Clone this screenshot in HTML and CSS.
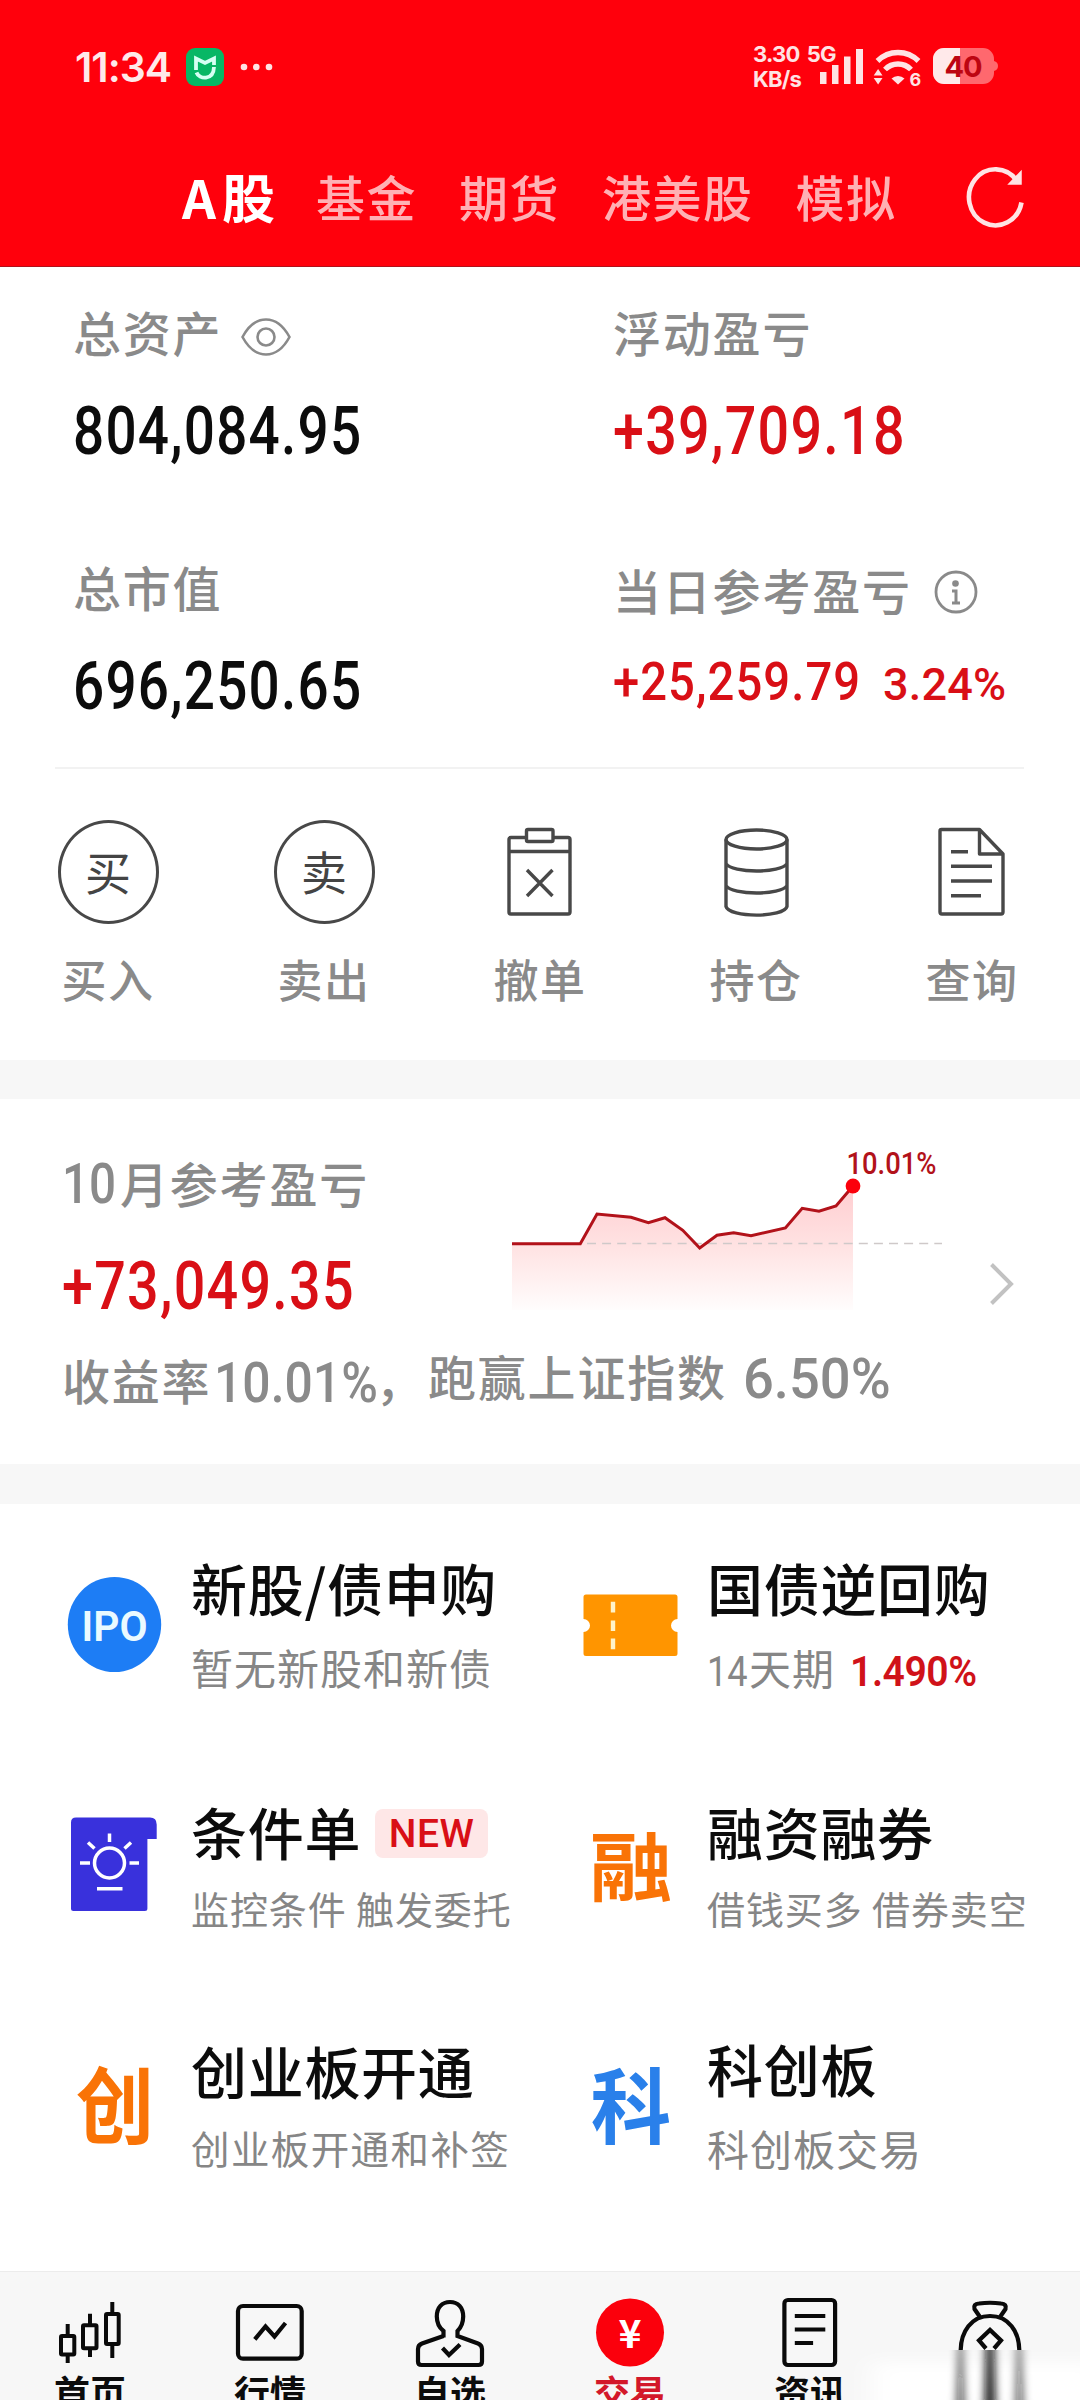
FILE: index.html
```html
<!DOCTYPE html>
<html lang="zh-CN">
<head>
<meta charset="utf-8">
<title>交易</title>
<link rel="stylesheet" href="styles.css">
</head>
<body>
<div class="screen">
  <header class="header">
    <div class="status">
      <span class="clock">11:34</span>
      <svg class="app-badge" width="38" height="38" viewBox="0 0 38 38"><rect width="38" height="38" rx="9" fill="#07b765"/><path d="M10 22V10.500L19 15L28 10.500V17" fill="none" stroke="#d5fff3" stroke-width="3.800"/><path d="M10.500 24.500C13 31.500 27.500 33 28 19" fill="none" stroke="#d5fff3" stroke-width="3.800"/></svg>
      <svg class="dots" width="32" height="8" viewBox="0 0 32 8"><g fill="#ffe3e4"><circle cx="4" cy="4" r="3.300"/><circle cx="16.300" cy="4" r="3.300"/><circle cx="29" cy="4" r="3.300"/></g></svg>
      <div class="net"><div>3.30 5G</div><div>KB/s</div></div>
      <svg class="signal" width="180" height="44" viewBox="820 45 180 44">
        <g fill="#ffe3e4">
          <rect x="820" y="72" width="6.500" height="12"/><rect x="832" y="65" width="6.500" height="19"/><rect x="844" y="56.500" width="6.500" height="27.500"/><rect x="856" y="49" width="7" height="35"/>
          <path d="M891.500 78.500a9.500 9.500 0 0 1 13 0L898 84.500z"/>
          <path d="M873.700 75.500l4.400-6.500 4.400 6.500zM873.700 78l4.400 6.500 4.400-6.500z"/>
        </g>
        <path d="M877.500 61a29 29 0 0 1 41 0M885 69.500a18 18 0 0 1 26 0" fill="none" stroke="#ffe3e4" stroke-width="5.400"/>
        <text x="909.500" y="85.500" class="wifi-gen">6</text>
        <path d="M944 48h39a11 11 0 0 1 11 11v2q4 1 4 5t-4 5v2a11 11 0 0 1-11 11h-39a11 11 0 0 1-11-11V59a11 11 0 0 1 11-11z" fill="#ff686e"/>
        <path d="M944 48h16v36h-16a11 11 0 0 1-11-11V59a11 11 0 0 1 11-11z" fill="#ffe9ea"/>
        <text x="963" y="77.300" text-anchor="middle" class="battery">40</text>
      </svg>
    </div>
    <nav class="markets">
      <span class="market active">A股</span><span class="market">基金</span><span class="market">期货</span><span class="market">港美股</span><span class="market">模拟</span>
      <svg class="refresh" width="60" height="64" viewBox="965 166 60 64"><path d="M1017 183A26.500 28 0 1 0 1021.500 204.500" fill="none" stroke="#ffe3e4" stroke-width="4.600"/><path d="M1021 173.500V186h-12z" fill="#ffe3e4" stroke="#ffe3e4" stroke-width="1.500"/></svg>
    </nav>
  </header>

  <section class="assets">
    <div class="stats">
      <div class="stat">
        <div class="label">总资产<svg class="eye" width="50" height="38" viewBox="0 0 50 38"><g fill="none" stroke="#8a8a8a" stroke-width="2.600"><path d="M1.500 19Q11 1.500 25 1.500T48.500 19Q39 36.500 25 36.500T1.500 19z"/><circle cx="25" cy="19" r="8.500"/></g></svg></div>
        <div class="value"><span class="num">804,084.95</span></div>
      </div>
      <div class="stat">
        <div class="label">浮动盈亏</div>
        <div class="value up"><span class="num">+39,709.18</span></div>
      </div>
      <div class="stat">
        <div class="label">总市值</div>
        <div class="value"><span class="num">696,250.65</span></div>
      </div>
      <div class="stat today">
        <div class="label">当日参考盈亏<svg class="info" width="44" height="44" viewBox="0 0 44 44"><circle cx="22" cy="22" r="20" fill="none" stroke="#8a8a8a" stroke-width="2.800"/><circle cx="21.500" cy="13.500" r="3.300" fill="#8a8a8a"/><path d="M18 21h4v11M18 33h8" fill="none" stroke="#8a8a8a" stroke-width="3"/></svg></div>
        <div class="value up"><span class="num">+25,259.79</span><span class="rate">3.24%</span></div>
      </div>
    </div>
    <div class="actions">
      <div class="action"><span class="ring">买</span><span>买入</span></div>
      <div class="action"><span class="ring">卖</span><span>卖出</span></div>
      <div class="action">
        <svg width="104" height="104" viewBox="488 819 104 104"><g fill="none" stroke="#484848" stroke-width="3.400"><path d="M525 837.500h-14a2 2 0 0 0-2 2v72.500a2 2 0 0 0 2 2h57a2 2 0 0 0 2-2v-72.500a2 2 0 0 0-2-2h-14M509 851.500h61M527 870l25.500 26M552.500 870l-25.500 26"/><rect x="526.500" y="829.500" width="26.500" height="12" rx="1.500"/></g></svg>
        <span>撤单</span></div>
      <div class="action">
        <svg width="104" height="104" viewBox="704 819 104 104"><g fill="none" stroke="#484848" stroke-width="3.400"><ellipse cx="756.500" cy="839.500" rx="30.500" ry="9.500"/><path d="M726 839.500v67c3 11.500 58 11.500 61 0v-67M726 863.500c6 10 55 10 61 0M726 885.500c6 10 55 10 61 0"/></g></svg>
        <span>持仓</span></div>
      <div class="action">
        <svg width="104" height="104" viewBox="920 819 104 104"><g fill="none" stroke="#484848" stroke-width="3.400" stroke-linejoin="round"><path d="M979.500 829.500H941.500a1.500 1.500 0 0 0-1.500 1.500v81a2 2 0 0 0 2 2h59a2 2 0 0 0 2-2V854zV854H1003M951 851.700h17M951 866.300h41M951 881h41M951 895.700h30"/></g></svg>
        <span>查询</span></div>
    </div>
  </section>

  <section class="month">
    <div class="month-top">
      <div>
        <div class="label"><span class="digits ten">10</span>月参考盈亏</div>
        <div class="value up"><span class="num">+73,049.35</span></div>
      </div>
      <svg class="chart" width="430" height="165" viewBox="512 1147 430 165">
        <defs><linearGradient id="area" x1="0" y1="1186" x2="0" y2="1310" gradientUnits="userSpaceOnUse"><stop offset="0" stop-color="#ffcdd0"/><stop offset=".5" stop-color="#ffe3e3"/><stop offset="1" stop-color="#fffdfd"/></linearGradient></defs>
        <path d="M512 1243.700H580.300L597 1214L631 1217.300L648.400 1222.700L665 1217.700L682.800 1230.300L699.700 1248L717 1235.300L733.700 1232.700L751 1235.700L785.400 1228L802.200 1208.300L819 1211.300L836 1206L853 1186V1310H512z" fill="url(#area)"/>
        <path d="M587 1243.500H942" stroke="#cfc9c9" stroke-width="1.600" stroke-dasharray="9 6.100"/>
        <path d="M512 1243.700H580.300L597 1214L631 1217.300L648.400 1222.700L665 1217.700L682.800 1230.300L699.700 1248L717 1235.300L733.700 1232.700L751 1235.700L785.400 1228L802.200 1208.300L819 1211.300L836 1206L853 1186" fill="none" stroke="#b2121a" stroke-width="3"/>
        <circle cx="853" cy="1186" r="7.400" fill="#fb000c"/>
        <text x="846.500" y="1174" class="peak" textLength="90" lengthAdjust="spacingAndGlyphs">10.01%</text>
      </svg>
      <svg class="chevron" width="26" height="44" viewBox="0 0 26 44"><path d="M2.500 2.500L22 22L2.500 41.500" fill="none" stroke="#c2c2c2" stroke-width="4"/></svg>
    </div>
    <div class="summary"><span>收益率<span class="digits ret">10.01%</span>，</span><span class="beat">跑赢上证指数<span class="digits idx">6.50%</span></span></div>
  </section>

  <section class="services">
    <div class="service">
      <svg width="110" height="100" viewBox="60 1575 110 100"><ellipse cx="114.500" cy="1624.500" rx="46.700" ry="47.500" fill="#1d7df5"/><text x="81.500" y="1641" class="ipo" textLength="66" lengthAdjust="spacingAndGlyphs">IPO</text></svg>
      <div class="copy"><div class="title">新股/债申购</div><div class="sub large">暂无新股和新债</div></div>
    </div>
    <div class="service">
      <svg width="110" height="100" viewBox="576 1575 110 100"><path d="M586 1594.500h89a2.500 2.500 0 0 1 2.500 2.500v22a6.500 6.500 0 0 0 0 13v21.500a2.500 2.500 0 0 1-2.500 2.500h-89a2.500 2.500 0 0 1-2.500-2.500V1632a6.500 6.500 0 0 0 0-13v-22a2.500 2.500 0 0 1 2.500-2.500z" fill="#ff9500"/><path d="M613 1601.700v10.700M613 1620.400v10.700M613 1638.500v10.700" stroke="#fff3c9" stroke-width="4.400"/></svg>
      <div class="copy"><div class="title">国债逆回购</div><div class="sub large"><span class="digits d14">14</span>天期<span class="yield">1.490%</span></div></div>
    </div>
    <div class="service">
      <svg width="110" height="100" viewBox="60 1820 110 100"><path d="M76 1818.500h74q6.700 0 6.700 7v14.500h-9.300v69.500a2.500 2.500 0 0 1-2.500 2.500H73.500a2.500 2.500 0 0 1-2.500-2.500V1823.500q0-5 5-5z" fill="#3931dc"/><g fill="none" stroke="#fff" stroke-width="3.500"><circle cx="109.500" cy="1864" r="15"/><path d="M109.500 1834.500v8.500M80 1864h10M129.500 1864h9.500M88 1843.500l6.500 6M124.500 1849.500l6.500-6M97 1889.700h25.500"/></g></svg>
      <div class="copy"><div class="title">条件单<span class="new">NEW</span></div><div class="sub">监控条件 触发委托</div></div>
    </div>
    <div class="service">
      <div class="glyph wide">融</div>
      <div class="copy"><div class="title">融资融券</div><div class="sub">借钱买多 借券卖空</div></div>
    </div>
    <div class="service">
      <div class="glyph">创</div>
      <div class="copy"><div class="title">创业板开通</div><div class="sub loose">创业板开通和补签</div></div>
    </div>
    <div class="service">
      <div class="glyph blue">科</div>
      <div class="copy star"><div class="title">科创板</div><div class="sub large">科创板交易</div></div>
    </div>
  </section>

  <footer class="tabbar">
    <div class="tab"><svg width="100" height="80" viewBox="40 2294 100 80"><g fill="none" stroke="#0a0a0a" stroke-width="4"><rect x="61" y="2336" width="13.300" height="18.500" rx="1"/><rect x="83" y="2325.300" width="13.500" height="23" rx="1"/><rect x="106" y="2314" width="12.700" height="30" rx="1"/><path d="M67.700 2324v11M67.700 2355v8M90 2313.700v11M90 2349v8M112.300 2302v11M112.300 2345v13"/></g></svg><span>首页</span></div>
    <div class="tab"><svg width="100" height="80" viewBox="220 2294 100 80"><g fill="none" stroke="#0a0a0a" stroke-width="4.200"><rect x="238" y="2306" width="63.700" height="52.700" rx="5"/><path d="M254.800 2339.300L265.500 2326.500L274.500 2336.500L285.500 2323"/></g></svg><span>行情</span></div>
    <div class="tab"><svg width="100" height="80" viewBox="400 2294 100 80"><g fill="none" stroke="#0a0a0a" stroke-width="4.200"><path d="M443.500 2337.500V2331C439 2327.500 436.800 2323 436.800 2316.500C436.800 2307.500 442 2302 450 2302S463.200 2307.500 463.200 2316.500C463.200 2323 461 2327.500 457.500 2331V2336L478 2343.500Q482 2345 482 2349V2361.500Q482 2365 478.500 2365H421.500Q418 2365 418 2361.500V2349Q418 2345 422 2343.500L443.500 2336"/><path d="M442.500 2348L449 2355L460 2344.500"/></g></svg><span>自选</span></div>
    <div class="tab on"><svg width="100" height="80" viewBox="580 2294 100 80"><circle cx="630" cy="2332.500" r="34" fill="#fb000c"/><text x="630" y="2347.500" text-anchor="middle" class="yen">¥</text></svg><span>交易</span></div>
    <div class="tab"><svg width="100" height="80" viewBox="760 2294 100 80"><g fill="none" stroke="#0a0a0a" stroke-width="4.200"><rect x="784.400" y="2300" width="50.700" height="65" rx="3.500"/><path d="M794.800 2316h30.500M794.800 2329.500h30.500M794.800 2343h18.300"/></g></svg><span>资讯</span></div>
    <div class="tab last"><svg width="180" height="106" viewBox="900 2294 180 106">
      <defs>
        <filter id="haze" x="-20%" y="-60%" width="140%" height="220%"><feGaussianBlur stdDeviation="12 7"/></filter>
        <filter id="smear" x="-80%" y="-10%" width="260%" height="120%"><feGaussianBlur stdDeviation="4 0"/></filter>
        <clipPath id="below"><rect x="930" y="2350" width="120" height="50"/></clipPath>
      </defs>
      <rect x="872" y="2362" width="230" height="60" fill="#fff" filter="url(#haze)"/>
      <g fill="none" stroke="#0a0a0a" stroke-width="4.200"><path d="M960.700 2350C961 2332 971 2316 990 2316S1019 2332 1019.300 2350"/><path d="M980 2317L974.500 2309Q973 2304 979 2303.500Q990 2302 1001 2303.500Q1007 2304 1005.500 2309L1000 2317"/><path d="M986 2348.500L979 2340.500L990 2330L1001 2340.500L994 2348.500"/></g>
      <g clip-path="url(#below)">
        <g filter="url(#smear)" fill="#111"><path d="M958.500 2345h4l2 60h-8z" opacity=".7"/><path d="M986 2345h8l1.500 60h-11z" opacity=".95"/><path d="M1017 2345h4l2.500 60h-8z" opacity=".65"/></g>
      </g>
    </svg></div>
  </footer>
</div>
</body>
</html>
```
FILE: styles.css
```css
* { box-sizing: border-box; }

body {
  margin: 0;
  background: #fff;
  font-family: "Noto Sans CJK SC", sans-serif;
  color: #0c0c0c;
}

.screen {
  width: 1080px;
  height: 2400px;
  overflow: hidden;
  display: flex;
  flex-direction: column;
  background: #f7f7f7;
}

svg { display: block; flex: none; overflow: visible; }

/* header */
.header {
  height: 267px;
  background: #ff000c;
  border-bottom: 1px solid #b1101a;
}

.status {
  height: 134px;
  display: flex;
  align-items: center;
  padding-left: 75px;
}

.clock {
  width: 111px;
  font: 600 41px/50px Inter, sans-serif;
  letter-spacing: -1px;
  color: #ffe9ea;
}

.dots { margin-left: 16px; }

.net {
  width: 99px;
  margin-left: 481px;
  margin-right: -32px;
  font: 700 22px/25px Inter, sans-serif;
  letter-spacing: -0.8px;
  word-spacing: 3px;
  color: #ffe3e4;
  white-space: nowrap;
}

.wifi-gen { font: 700 18px Inter, sans-serif; fill: #ffe3e4; }
.battery { font: 700 29px Inter, sans-serif; fill: #bd0612; letter-spacing: -1px; }

.markets {
  display: flex;
  align-items: center;
  gap: 42px;
  padding-left: 182px;
  height: 124px;
}

.market {
  font-size: 49px;
  line-height: 60px;
  letter-spacing: 1.5px;
  font-weight: 500;
  color: #ffb0b4;
}

.market.active { width: 92px; font-size: 53px; letter-spacing: 6px; font-weight: 700; color: #fff; white-space: nowrap; }

.refresh { margin-left: 26px; }

/* account figures */
.assets { height: 793px; background: #fff; padding-top: 34px; }

.stats {
  display: grid;
  grid-template-columns: 540px 1fr;
  row-gap: 90px;
  padding-left: 73px;
}

.label {
  display: flex;
  align-items: center;
  height: 60px;
  font-size: 48px;
  line-height: 60px;
  letter-spacing: 1.8px;
  font-weight: 500;
  color: #8a8a8a;
  white-space: nowrap;
}

.eye { margin: 12px 0 0 19px; }
.info { margin: 7px 0 0 22px; }

.value {
  display: flex;
  align-items: baseline;
  margin-top: 36px;
  height: 69px;
  font: 500 66px/70px Roboto, sans-serif;
}

.value.up { color: #d90f16; }

.num { display: block; width: 286px; letter-spacing: 1.5px; white-space: nowrap; transform: scaleX(.831); transform-origin: 0 50%; }
.up .num { transform: scaleX(.843); }

.today .label { padding-top: 5px; }
.today .value { font-size: 54px; margin-top: 31px; }
.today .num { width: 270px; letter-spacing: 1.2px; transform: scaleX(.874); }
.rate { font: 500 45px/70px Roboto, sans-serif; letter-spacing: .2px; }

/* quick actions */
.actions {
  display: grid;
  grid-template-columns: repeat(5, 216px);
  margin: 46px 0 0;
  position: relative;
  padding-top: 53px;
}

.actions::before {
  content: "";
  position: absolute;
  left: 55px;
  right: 56px;
  top: 0;
  height: 2px;
  background: #f2f2f2;
}

.action {
  display: flex;
  flex-direction: column;
  align-items: center;
  gap: 25px;
  font-size: 45px;
  line-height: 60px;
  letter-spacing: 1.5px;
  font-weight: 500;
  color: #8a8a8a;
}

.action svg { margin-top: -1px; margin-bottom: 1px; }

.ring {
  width: 101px;
  height: 104px;
  border: 3.4px solid #484848;
  border-radius: 50%;
  text-align: center;
  font-size: 46px;
  font-weight: 400;
  line-height: 94px;
  letter-spacing: 0;
  color: #444;
}

/* monthly result */
.month { height: 365px; margin-top: 39px; background: #fff; padding: 53px 0 0 62px; }

.month-top { display: grid; grid-template-columns: 450px 430px 1fr; }
.month-top .value { margin-top: 40px; }
.chart { margin-top: -5px; }
.peak { font: 500 31px Roboto, sans-serif; fill: #b2121a; }
.chevron { margin: 110px 0 0 47px; }

.digits {
  display: inline-block;
  font-family: Roboto, sans-serif;
  font-size: 56px;
  font-weight: 500;
  letter-spacing: 0;
  white-space: nowrap;
  transform-origin: 0 50%;
}

.ten { width: 58px; transform: translateY(2px) scaleX(.85); }
.ret { width: 161px; margin-left: 3px; transform: translateY(2px) scaleX(.89); }
.idx { width: 150px; margin-left: 16px; transform: translateY(2px) scaleX(.97); }

.summary {
  display: flex;
  margin-top: 28px;
  height: 60px;
  font-size: 48px;
  line-height: 60px;
  letter-spacing: 1.8px;
  font-weight: 500;
  color: #8a8a8a;
  white-space: nowrap;
}

.summary > span { width: 366px; }
.summary .beat { margin-top: -4px; }

/* services */
.services {
  height: 767px;
  margin-top: 40px;
  background: #fff;
  padding: 48px 0 0 60px;
  display: grid;
  grid-template-columns: 516px 1fr;
  grid-template-rows: 244px 239px 1fr;
}

.service { display: flex; gap: 21px; }
.service > svg { margin-top: 23px; }

.title {
  display: flex;
  align-items: center;
  font-size: 56px;
  line-height: 70px;
  letter-spacing: .7px;
  font-weight: 500;
  white-space: nowrap;
}

.sub {
  margin-top: 17px;
  font-size: 38px;
  line-height: 50px;
  letter-spacing: .9px;
  color: #868686;
  white-space: nowrap;
}

.sub.loose { font-size: 38.5px; letter-spacing: 1.4px; }
.sub.large { font-size: 42px; letter-spacing: 1px; margin-top: 20px; }
.star .title { margin-top: -2px; }

.d14 { font-size: 43px; font-weight: 400; width: 42px; transform: translateY(1px) scaleX(.84); }

.yield {
  display: inline-block;
  margin-left: 15px;
  font: 600 43px/40px Roboto, sans-serif;
  letter-spacing: -.5px;
  color: #d01219;
  transform: translateY(1px) scaleX(.91);
  transform-origin: 0 50%;
}

.new {
  width: 113px;
  height: 49px;
  margin: 4px 0 0 14px;
  border-radius: 8px;
  background: #fee7e7;
  color: #d90f16;
  font: 500 39px/51px Roboto, sans-serif;
  letter-spacing: .5px;
  text-align: center;
}

.glyph {
  width: 110px;
  height: 100px;
  margin-top: 20px;
  text-align: center;
  font-size: 78px;
  line-height: 92px;
  font-weight: 700;
  color: #f97306;
  transform: scaleY(1.06);
}

.glyph.wide { transform: scale(1.06, .96); }
.glyph.blue { color: #2a80ea; transform: scale(1.03, 1.05); }

.ipo { font: 600 43px Roboto, sans-serif; fill: #eafaff; }

/* tab bar */
.tabbar {
  height: 129px;
  display: grid;
  grid-template-columns: repeat(6, 180px);
  background: #f7f7f7;
  border-top: 1px solid #ececec;
  padding-top: 22px;
}

.tab {
  display: flex;
  flex-direction: column;
  align-items: center;
  font-size: 36px;
  line-height: 40px;
  font-weight: 700;
}

.tab span { margin-top: -3px; }
.tab.on span { color: #d3182a; }
.yen { font: 700 39px "Noto Sans CJK SC", sans-serif; fill: #fff; }
```
